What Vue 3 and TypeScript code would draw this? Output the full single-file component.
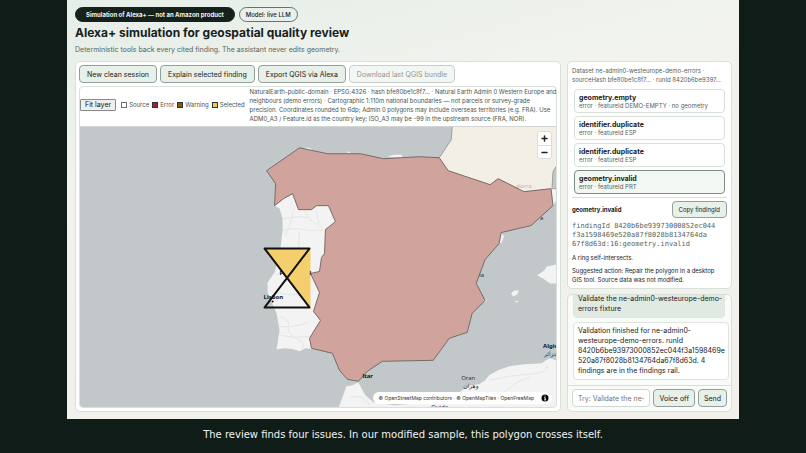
<script setup lang="ts">
import { ref } from 'vue'

interface Finding {
  code: string
  detail: string
}

interface LegendEntry {
  label: string
  kind: string
}

const findings: Finding[] = [
  { code: 'geometry.empty', detail: 'error · featureId DEMO-EMPTY · no geometry' },
  { code: 'identifier.duplicate', detail: 'error · featureId ESP' },
  { code: 'identifier.duplicate', detail: 'error · featureId ESP' },
  { code: 'geometry.invalid', detail: 'error · featureId PRT' },
]
const selected = ref(3)

const legend: LegendEntry[] = [
  { label: 'Source', kind: 'source' },
  { label: 'Error', kind: 'error' },
  { label: 'Warning', kind: 'warning' },
  { label: 'Selected', kind: 'selected' },
]

const prompt = ref('')
</script>

<template>
  <div class="stage">
    <main class="app">
      <header class="head">
        <div class="badges">
          <span class="badge dark">Simulation of Alexa+ — not an Amazon product</span>
          <span class="badge">Model: live LLM</span>
        </div>
        <h1>Alexa+ simulation for geospatial quality review</h1>
        <p class="lead">Deterministic tools back every cited finding. The assistant never edits geometry.</p>
      </header>

      <div class="columns">
        <section class="panel work">
          <div class="actions">
            <button type="button" class="btn">New clean session</button>
            <button type="button" class="btn">Explain selected finding</button>
            <button type="button" class="btn">Export QGIS via Alexa</button>
            <button type="button" class="btn" disabled>Download last QGIS bundle</button>
          </div>

          <div class="mapbox">
            <div class="toolbar">
              <button type="button" class="fit">Fit layer</button>
              <ul class="legend">
                <li v-for="l in legend" :key="l.kind"><i :class="['swatch', l.kind]"></i>{{ l.label }}</li>
              </ul>
              <p class="source">
                NaturalEarth-public-domain · EPSG:4326 · hash bfe80be1c8f7… · Natural Earth Admin 0 Western Europe and<br />
                neighbours (demo errors) · Cartographic 1:110m national boundaries — not parcels or survey-grade<br />
                precision. Coordinates rounded to 6dp; Admin 0 polygons may include overseas territories (e.g. FRA). Use<br />
                ADM0_A3 / Feature.id as the country key; ISO_A3 may be -99 in the upstream source (FRA, NOR).
              </p>
            </div>

            <div class="map">
              <svg class="canvas" viewBox="80 126 477 281" preserveAspectRatio="xMidYMid slice" role="img" aria-label="Map of the Iberian Peninsula">
                <rect class="sea" x="0" y="0" width="806" height="453" />
                <!-- base land -->
                <path class="land" d="M275 205L280 208 283 218 283 230 281 247 275 272 268 282 268 292 273 304 277 313 280 330 277 349 286 348 294 349 300 351 306 348 313 349 335 300 345 215 325 195 293 190z" />
                <path class="land" d="M339 408L347 386 353 385 359 382 362 388 366 395 374 402 395 405 430 402 450 397 460 392 466 388 472 385 480 384 486 380 490 375 499 370 510 366 525 364 543 363 547 360 551 358 557 360V408z" />
                <path class="land" d="M538 275L545 270 548 266 557 264V283L551 283 544 278zM512 293L515 290 520 290 518 294 514 296zM516 300L520 301 517 302zM304 147L310 147 314 150zM346 151L350 151 352 153zM388 156L394 154 402 154 404 157zM501 231L505 236 502 243 500 242zM484 297L488 300 485 302zM552 185L557 189V200L553 207z" />
                <path class="land shade" d="M283 230Q295 227 304 229T324 229M284 218Q298 215 308 217M294 208Q291 226 285 236M305 209L310 219 321 226M280 316Q291 319 289 326T297 338 302 350M279 326Q292 328 309 322M281 335L295 337 310 336M276 274Q291 270 309 273M270 290Q285 296 311 294M300 231L299 246M316 209L320 224M490 380Q510 375 530 374T548 365M351 397L361 396 370 404M505 392L518 382 531 377M458 397L470 394 481 401" />
                <path class="france" d="M453 126L452 139 440 157 449 170 491 184 499 178 525 191 553 188 554 171 557 166V126z" />
                <path class="border" d="M453 126L452 139 440 157M553 188L554 171 557 166M553 188L557 188" />

                <text class="place pale" x="517" y="187">dorra</text>
                <text class="place strong" x="280" y="275">Portugal</text>
                <!-- findings overlay -->
                <path class="error-area" d="M267 170L300 147 328 153H361L384 158 420 156 440 157 449 170 491 184 499 178 525 191 552 188 554 205 532 225 502 232 500 243 486 259 477 283 486 300 473 313 468 332 450 338 434 360 383 361 368 371 359 381 348 379 340 370 333 353 312 348 310 338 321 320 314 311 320 292 311 273 320 271 322 257 325 253 326 229 336 221 329 205 317 205 312 209H299L293 193 284 198 275 205 276 183z" />
                <path class="selected-area" d="M265 248H311V308z" />
                <path class="selected-line" d="M265 248H310L265 307H310z" />

                <text class="place strong" x="310" y="275">l</text>
                <text class="place strong" x="264" y="299">Lisbon</text>
                <circle cx="273" cy="301" r="1" />
                <text class="place strong" x="363" y="378">ltar</text>
                <text class="place" x="480" y="277">ia</text>
                <text class="place" x="541" y="219">a</text>
                <text class="place" x="462" y="380">Oran</text>
                <text class="place" x="464" y="388">وهران</text>
                <text class="place" x="432" y="409">Oujda</text>
                <text class="place strong" x="544" y="348">Algiers</text>
                <text class="place" x="545" y="356">الجزائر</text>
              </svg>
              <div class="zoom">
                <button type="button" aria-label="Zoom in"><svg viewBox="0 0 13 13"><path d="M6.5 4v5M4 6.5h5" /></svg></button>
                <button type="button" aria-label="Zoom out"><svg viewBox="0 0 13 13"><path d="M4 6.5h5" /></svg></button>
              </div>
              <div class="attribution">
                <span><a href="#">© OpenStreetMap contributors</a> · <a href="#">© OpenMapTiles</a> · <a href="#">OpenFreeMap</a></span>
                <svg class="info" viewBox="0 0 8 8"><circle cx="4" cy="4" r="3.5" /><path d="M4 1.5v1M3.3 3.6H4.2V5.8M3.2 5.9h1.9" /></svg>
              </div>
            </div>
          </div>
        </section>

        <aside class="rail">
          <section class="panel findings">
            <p class="meta">Dataset ne-admin0-westeurope-demo-errors · sourceHash bfe80be1c8f7… · runId 8420b6be9397…</p>
            <div class="list">
              <button
                v-for="(f, i) in findings"
                :key="i"
                type="button"
                :class="['finding', { active: i === selected }]"
                @click="selected = i"
              >
                <strong>{{ f.code }}</strong>
                <span>{{ f.detail }}</span>
              </button>
            </div>
            <div class="detail">
              <div class="detail-head">
                <h2>geometry.invalid</h2>
                <button type="button" class="btn copy">Copy findingId</button>
              </div>
              <code>findingId 8420b6be93973000852ec044<br />f3a1598469e520a87f8028b8134764da<br />67f8d63d:16:geometry.invalid</code>
              <p>A ring self-intersects.</p>
              <p>Suggested action: Repair the polygon in a desktop<br />GIS tool. Source data was not modified.</p>
            </div>
          </section>

          <section class="panel chat">
            <div class="log">
              <p class="msg user">Validate the ne-admin0-westeurope-demo-<br />errors fixture</p>
              <p class="msg reply">Validation finished for ne-admin0-<br />westeurope-demo-errors. runId 8420b6be93973000852ec044f3a1598469e<wbr />520a87f8028b8134764da67f8d63d. 4 findings are in the findings rail.</p>
            </div>
            <form class="composer" @submit.prevent>
              <input v-model="prompt" type="text" aria-label="Message" placeholder="Try: Validate the ne-admin0 fixture" />
              <button type="button" class="btn">Voice off</button>
              <button type="submit" class="btn">Send</button>
            </form>
          </section>
        </aside>
      </div>
    </main>
    <p class="caption">The review finds four issues. In our modified sample, this polygon crosses itself.</p>
  </div>
</template>

<style>
body {
  margin: 0;
  background: #0f1c18;
}
</style>

<style scoped>
* {
  box-sizing: border-box;
}
p,
h1,
h2,
ul {
  margin: 0;
  padding: 0;
}
button,
input {
  font-family: inherit;
  margin: 0;
}
.stage {
  display: flex;
  flex-direction: column;
  height: 100vh;
  padding: 0 67px;
  background: #0f1c18;
  font-family: Inter, 'Liberation Sans', sans-serif;
  color: #17211c;
}
.app {
  flex: 1;
  min-height: 0;
  display: flex;
  flex-direction: column;
  gap: 6px;
  padding: 7px 7px 7px 8px;
  background: linear-gradient(165deg, #e5eee7 0%, #f1f3ed 30%, #f2f0eb 100%);
}
.head {
  height: 48px;
}
.badges {
  display: flex;
  gap: 4px;
}
.badge {
  height: 15px;
  padding: 0 6px;
  border: 1px solid #66736b;
  border-radius: 8px;
  font-size: 6px;
  line-height: 13px;
  font-weight: 500;
}
.badge.dark {
  padding: 0 10px;
  background: #17211c;
  border-color: #17211c;
  color: #f2f5f1;
  font-weight: 700;
}
h1 {
  margin-top: 3px;
  font-size: 12px;
  line-height: 16px;
  font-weight: 700;
}
.lead {
  margin-top: 4px;
  font-size: 7px;
  line-height: 10px;
  color: #56635b;
}
.columns {
  flex: 1;
  min-height: 0;
  display: grid;
  grid-template-columns: minmax(0, 1fr) 165px;
  gap: 6px;
}
.panel {
  background: #fff;
  border: 1px solid #d9dfd9;
  border-radius: 5px;
}
.work {
  min-height: 0;
  display: flex;
  flex-direction: column;
  gap: 3px;
  padding: 3px;
}
.actions {
  display: flex;
  gap: 3px;
}
.btn {
  height: 18px;
  padding: 0 6px;
  border: 1px solid #93a099;
  border-radius: 4px;
  background: #e8f0ea;
  color: #17211c;
  font-size: 7px;
  white-space: nowrap;
}
.actions .btn {
  padding: 0 7px;
}
.btn:disabled {
  opacity: 0.5;
}
.mapbox {
  flex: 1;
  min-height: 0;
  display: flex;
  flex-direction: column;
  border: 1px solid #d9dfd9;
  border-radius: 4px;
  overflow: hidden;
}
.toolbar {
  display: flex;
  align-items: center;
  height: 40px;
  gap: 5px;
  padding-bottom: 4px;
  border-bottom: 1px solid #d0d6d2;
}
.fit {
  flex: none;
  height: 12px;
  padding: 0 4px;
  border: 1px solid #8a8a8a;
  border-radius: 1px;
  background: #efefef;
  color: #111;
  font-size: 7px;
  line-height: 10px;
}
.legend {
  flex: none;
  display: flex;
  gap: 3px;
  list-style: none;
  font-size: 6px;
  color: #46534b;
}
.legend li {
  display: flex;
  align-items: center;
  gap: 2px;
}
.swatch {
  width: 6px;
  height: 6px;
  border: 1px solid #333;
}
.swatch.source {
  background: #fff;
  border-color: #66736b;
}
.swatch.error {
  background: #9b2335;
}
.swatch.warning {
  background: #8a5a00;
}
.swatch.selected {
  background: #f2c94c;
}
.source {
  flex: 1;
  font-size: 6px;
  line-height: 9px;
  white-space: nowrap;
  color: #46534b;
}
.map {
  position: relative;
  flex: 1;
  min-height: 0;
}
.canvas {
  display: block;
  width: 100%;
  height: 100%;
}
.sea {
  fill: #c2c8ca;
}
.land {
  fill: #f2f3f2;
}
.shade {
  fill: none;
  stroke: #e3e6e5;
  stroke-width: 1;
}
.france {
  fill: #f3efe6;
}
.border {
  fill: none;
  stroke: #9b9f9d;
  stroke-width: 1;
}
.error-area {
  fill: #d0a39d;
  stroke: #776966;
  stroke-width: 1;
}
.selected-area {
  fill: #f5cf6e;
}
.selected-line {
  fill: none;
  stroke: #111;
  stroke-width: 2;
  stroke-linejoin: round;
}
.place {
  font-family: 'Noto Sans', 'DejaVu Sans', sans-serif;
  font-size: 6px;
  fill: #333;
}
.place.strong {
  font-weight: 700;
  fill: #111;
}
.place.pale {
  fill: #b8b5af;
}
.zoom {
  position: absolute;
  top: 4px;
  right: 4px;
  display: flex;
  flex-direction: column;
  border: 1px solid #dcdcd8;
  border-radius: 3px;
  background: #fff;
}
.zoom button {
  display: block;
  width: 13px;
  height: 13px;
  padding: 0;
  border: 0;
  background: none;
}
.zoom button + button {
  border-top: 1px solid #ddd;
}
.zoom svg {
  display: block;
  fill: none;
  stroke: #222;
  stroke-width: 1.5;
  stroke-linecap: round;
}
.attribution {
  position: absolute;
  right: 4px;
  bottom: 3px;
  display: flex;
  align-items: center;
  gap: 7px;
  height: 12px;
  padding: 0 3px 0 6px;
  border-radius: 6px;
  background: #fff;
  font-size: 5px;
  color: #333;
}
.attribution a {
  color: inherit;
  text-decoration: none;
}
.info {
  width: 8px;
  height: 8px;
}
.info path {
  fill: none;
  stroke: #fff;
  stroke-width: 1;
}
.rail {
  min-height: 0;
  display: flex;
  flex-direction: column;
  gap: 5px;
}
.findings {
  padding: 4px;
}
.meta {
  font-size: 6px;
  line-height: 9px;
  color: #56635b;
}
.list {
  display: flex;
  flex-direction: column;
  gap: 3px;
  padding: 5px 2px 3px;
  border-bottom: 1px solid #d9dfd9;
}
.finding {
  display: flex;
  flex-direction: column;
  justify-content: center;
  height: 24px;
  padding: 0 4px;
  border: 1px solid #d9dfd9;
  border-radius: 4px;
  background: #fff;
  color: #17211c;
  text-align: left;
}
.finding.active {
  background: #f2f8f4;
  border-color: #7d8c83;
}
.finding strong {
  font-size: 7px;
  line-height: 9px;
  font-weight: 700;
}
.finding span {
  font-size: 6px;
  line-height: 8px;
  color: #56635b;
}
.detail {
  display: flex;
  flex-direction: column;
  gap: 4px;
  padding-top: 3px;
}
.detail-head {
  display: flex;
  justify-content: space-between;
  align-items: center;
}
h2 {
  font-size: 6px;
  font-weight: 700;
}
.btn.copy {
  height: 17px;
  font-size: 6px;
}
.detail code {
  font-family: 'DejaVu Sans Mono', monospace;
  font-size: 7px;
  line-height: 9px;
  color: #56635b;
  white-space: nowrap;
}
.detail p {
  font-size: 6px;
  line-height: 9px;
}
.chat {
  flex: 1;
  min-height: 0;
  display: flex;
  flex-direction: column;
  background: #f8fbf8;
}
.log {
  flex: 1;
  min-height: 0;
  display: flex;
  flex-direction: column;
  justify-content: flex-end;
  gap: 4px;
  padding: 0 2px 5px 5px;
  overflow: hidden;
}
.msg {
  flex: none;
  padding: 3px 4px;
  border: 1px solid #dfe5df;
  border-radius: 4px;
  background: #fff;
  font-size: 7px;
  line-height: 10px;
}
.msg.user {
  margin-right: 4px;
  padding-right: 2px;
  background: #e0eae2;
  white-space: nowrap;
}
.composer {
  display: flex;
  gap: 3px;
  padding: 3px 4px 4px;
  border-top: 1px solid #d9dfd9;
}
.composer .btn {
  padding: 0 5px;
}
.composer input {
  flex: 1;
  min-width: 0;
  height: 18px;
  padding: 0 5px;
  border: 1px solid #d0d8d2;
  border-radius: 4px;
  background: #fff;
  font-size: 7px;
}
.composer input::placeholder {
  color: #757575;
}
.caption {
  height: 34px;
  font-family: 'DejaVu Sans', sans-serif;
  font-size: 10px;
  line-height: 31px;
  text-align: center;
  color: #f2f2f2;
}
</style>
